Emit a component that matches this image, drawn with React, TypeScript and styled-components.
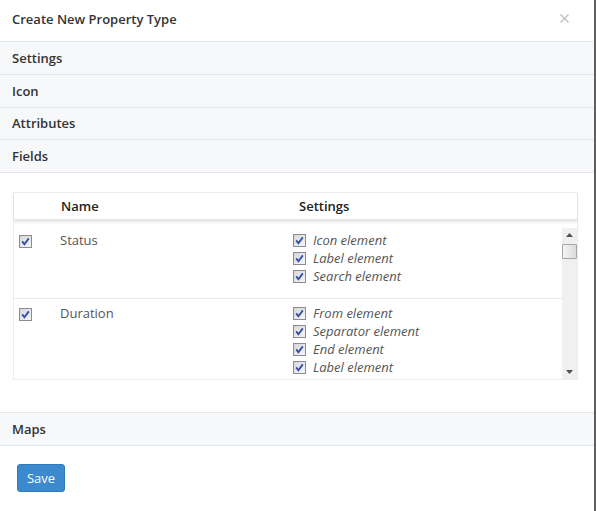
import * as React from "react";
import styled, { createGlobalStyle } from "styled-components";

const GlobalStyle = createGlobalStyle`
    html, body {
        margin: 0;
        padding: 0;
        background: #ffffff;
    }
    body {
        font-family: "Open Sans", "Noto Sans", "Liberation Sans", sans-serif;
        font-size: 13px;
        color: #333;
    }
`

const Modal = styled.div`
    width: 594px;
    height: 511px;
    border-right: 2px solid #5e5e5e;
    display: flex;
    flex-direction: column;
    background: #fff;
`

const Header = styled.div`
    height: 41px;
    flex-shrink: 0;
    padding: 0 25px 0 12px;
    display: flex;
    align-items: center;
    justify-content: space-between;
    border-bottom: 1px solid #e4e6e9;
`

const Title = styled.h4`
    margin: 0;
    font-size: 13px;
    font-weight: 600;
    color: #333;
    margin-top: -4px;
`

const Close = styled.button`
    border: 0;
    background: none;
    padding: 0;
    width: 9px;
    height: 9px;
    display: flex;
    margin-top: -4px;
`

const PanelHeading = styled.div`
    height: 31.75px;
    flex-shrink: 0;
    padding: 0 12px;
    display: flex;
    align-items: center;
    background: #f7f8fa;
    border-bottom: 1px solid #e2e5e9;
    font-size: 13px;
    font-weight: 600;
    color: #333;
`

const PanelBody = styled.div`
    padding: 19px 16px 32px 13px;
    border-bottom: 1px solid #e2e5e9;
`

const Table = styled.div`
    border: 1px solid #ededed;
    display: flex;
    flex-direction: column;
`

const TableHead = styled.div`
    height: 26px;
    display: grid;
    grid-template-columns: 47px 238px 1fr;
    align-items: center;
    box-shadow: 0 2px 3px rgba(0, 0, 0, 0.12);
    border-bottom: 1px solid #e6e6e6;
    font-weight: 600;
    color: #222;
`

const HeadCell = styled.div`
    padding-left: 0;
`

const Scroller = styled.div`
    margin-top: 6px;
    height: 153px;
    display: flex;
    overflow: hidden;
`

const Rows = styled.div`
    flex: 1;
    overflow: hidden;
`

const Row = styled.div`
    display: grid;
    grid-template-columns: 46px 233px 1fr;
    padding: 5px 0 13px;
    border-bottom: 1px solid #e8e8e8;
    line-height: 18px;
    color: #555;
`

const CheckCell = styled.div`
    padding: 3px 0 0 5px;
`

const SettingList = styled.div`
    display: flex;
    flex-direction: column;
`

const SettingItem = styled.label`
    display: flex;
    align-items: center;
    gap: 7px;
    height: 18px;
    font-style: italic;
    color: #555;
`

const ScrollBar = styled.div`
    width: 15px;
    margin-top: 2px;
    background: #f0f0f0;
    display: flex;
    flex-direction: column;
    align-items: center;
`

const Arrow = styled.div`
    height: 14px;
    width: 15px;
    display: flex;
    align-items: center;
    justify-content: center;
`

const Thumb = styled.div`
    width: 13px;
    height: 13px;
    margin-top: 2px;
    border: 1px solid #a6a6a6;
    border-radius: 1px;
    background: linear-gradient(to right, #f4f4f4, #dcdcdc);
    box-sizing: content-box;
`

const Spacer = styled.div`
    flex: 1;
`

const Footer = styled.div`
    padding: 18px 17px;
`

const SaveButton = styled.button`
    width: 48px;
    height: 28px;
    border: 1px solid #3279bb;
    border-radius: 3px;
    background: #3b8ad0;
    color: #fff;
    font-family: inherit;
    font-size: 13px;
    padding: 0;
`

const Check = () => (
    <svg width="13" height="13" viewBox="0 0 13 13">
        <defs>
            <linearGradient id="cbg" x1="0" y1="0" x2="1" y2="1">
                <stop offset="0" stopColor="#d6d6d8" />
                <stop offset="1" stopColor="#f7f7f9" />
            </linearGradient>
        </defs>
        <rect x="0.5" y="0.5" width="12" height="12" fill="url(#cbg)" stroke="#8c8c90" />
        <path d="M3.2 6.4 L5.4 9.2 L9.8 3.4" fill="none" stroke="#2f4fa6" strokeWidth="1.8" />
    </svg>
)

const fields = [
    { name: "Status", settings: ["Icon element", "Label element", "Search element"] },
    { name: "Duration", settings: ["From element", "Separator element", "End element", "Label element", "Search element"] },
]

export default function App() {
    return (
        <>
            <GlobalStyle />
            <Modal>
                <Header>
                    <Title>Create New Property Type</Title>
                    <Close aria-label="close">
                        <svg width="9" height="9" viewBox="0 0 9 9">
                            <path d="M0.5 0.5 L8.5 8.5 M8.5 0.5 L0.5 8.5" stroke="#bdbdbd" strokeWidth="1.2" />
                        </svg>
                    </Close>
                </Header>
                <PanelHeading>Settings</PanelHeading>
                <PanelHeading>Icon</PanelHeading>
                <PanelHeading>Attributes</PanelHeading>
                <PanelHeading>Fields</PanelHeading>
                <PanelBody>
                    <Table>
                        <TableHead>
                            <HeadCell />
                            <HeadCell>Name</HeadCell>
                            <HeadCell>Settings</HeadCell>
                        </TableHead>
                        <Scroller>
                            <Rows>
                                {fields.map((f) => (
                                    <Row key={f.name}>
                                        <CheckCell><Check /></CheckCell>
                                        <div>{f.name}</div>
                                        <SettingList>
                                            {f.settings.map((s, i) => (
                                                <SettingItem key={i}>
                                                    <Check />
                                                    {s}
                                                </SettingItem>
                                            ))}
                                        </SettingList>
                                    </Row>
                                ))}
                            </Rows>
                            <ScrollBar>
                                <Arrow>
                                    <svg width="7" height="4" viewBox="0 0 7 4"><path d="M0 4 L3.5 0 L7 4 Z" fill="#505050" /></svg>
                                </Arrow>
                                <Thumb />
                                <Spacer />
                                <Arrow>
                                    <svg width="7" height="4" viewBox="0 0 7 4"><path d="M0 0 L3.5 4 L7 0 Z" fill="#505050" /></svg>
                                </Arrow>
                            </ScrollBar>
                        </Scroller>
                    </Table>
                </PanelBody>
                <PanelHeading>Maps</PanelHeading>
                <Footer>
                    <SaveButton>Save</SaveButton>
                </Footer>
            </Modal>
        </>
    )
}
